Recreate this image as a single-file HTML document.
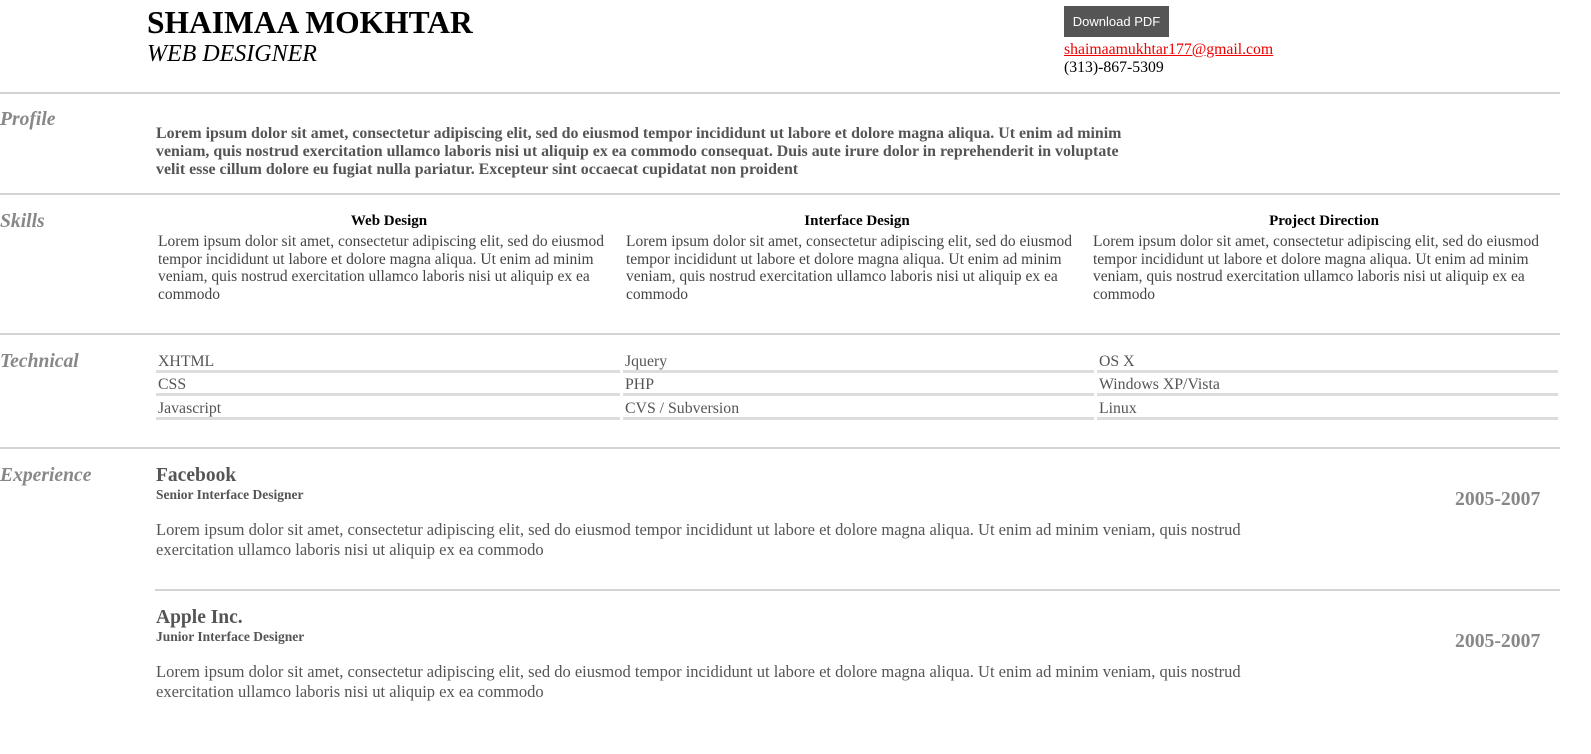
<!DOCTYPE html>
<html><head><meta charset="utf-8"><style>
body{margin:0;width:1591px;height:754px;position:relative;font-family:"Liberation Serif",serif;background:#fff;overflow:hidden}
.a{position:absolute;margin:0}
.hr{position:absolute;left:0;width:1560px;height:2px;background:#d3d3d3}
.lab{position:absolute;left:0;font-style:italic;font-weight:bold;font-size:19.6px;color:#888}
.sk h4{margin:0;text-align:center;font-size:15px;color:#000}
.sk p{margin:3px 0 0;font-size:15.5px;line-height:17.5px;color:#444}
.tc{position:absolute;font-size:15.8px;color:#555;border-bottom:3px solid #ddd;height:21px;line-height:20px;padding-left:2px;box-sizing:border-box}
.co{font-size:19.5px;font-weight:bold;color:#555}
.ro{font-size:13.5px;font-weight:bold;color:#555}
.yr{font-size:19.7px;font-weight:bold;color:#888}
.ex{font-size:16.5px;color:#555;line-height:20px}
</style></head><body>
<div class="a" style="left:147px;top:5px;font-size:31.5px;font-weight:bold">SHAIMAA MOKHTAR</div>
<div class="a" style="left:147px;top:41px;font-size:24px;font-style:italic">WEB DESIGNER</div>
<div class="a" style="left:1064px;top:6px;width:105px;height:31px;background:#555;color:#fff;font-family:'Liberation Sans',sans-serif;font-size:13px;line-height:31px;text-align:center">Download PDF</div>
<div class="a" style="left:1064px;top:41px;font-size:15.75px;line-height:18px"><span style="color:#e00;text-decoration:underline">shaimaamukhtar177@gmail.com</span><br>(313)-867-5309</div>
<div class="hr" style="top:92px"></div>
<div class="lab" style="top:109px">Profile</div>
<div class="a" style="left:156px;top:125px;width:970px;font-size:15.9px;font-weight:bold;color:#555;line-height:18px">Lorem ipsum dolor sit amet, consectetur adipiscing elit, sed do eiusmod tempor incididunt ut labore et dolore magna aliqua. Ut enim ad minim veniam, quis nostrud exercitation ullamco laboris nisi ut aliquip ex ea commodo consequat. Duis aute irure dolor in reprehenderit in voluptate velit esse cillum dolore eu fugiat nulla pariatur. Excepteur sint occaecat cupidatat non proident</div>
<div class="hr" style="top:193px"></div>
<div class="lab" style="top:211px">Skills</div>
<div class="a sk" style="left:158px;top:213px;width:462px"><h4>Web Design</h4><p>Lorem ipsum dolor sit amet, consectetur adipiscing elit, sed do eiusmod tempor incididunt ut labore et dolore magna aliqua. Ut enim ad minim veniam, quis nostrud exercitation ullamco laboris nisi ut aliquip ex ea commodo</p></div>
<div class="a sk" style="left:626px;top:213px;width:462px"><h4>Interface Design</h4><p>Lorem ipsum dolor sit amet, consectetur adipiscing elit, sed do eiusmod tempor incididunt ut labore et dolore magna aliqua. Ut enim ad minim veniam, quis nostrud exercitation ullamco laboris nisi ut aliquip ex ea commodo</p></div>
<div class="a sk" style="left:1093px;top:213px;width:462px"><h4>Project Direction</h4><p>Lorem ipsum dolor sit amet, consectetur adipiscing elit, sed do eiusmod tempor incididunt ut labore et dolore magna aliqua. Ut enim ad minim veniam, quis nostrud exercitation ullamco laboris nisi ut aliquip ex ea commodo</p></div>
<div class="hr" style="top:333px"></div>
<div class="lab" style="top:351px">Technical</div>
<div class="tc" style="left:156px;top:352px;width:464px">XHTML</div>
<div class="tc" style="left:156px;top:375px;width:464px">CSS</div>
<div class="tc" style="left:156px;top:399px;width:464px">Javascript</div>
<div class="tc" style="left:623px;top:352px;width:471px">Jquery</div>
<div class="tc" style="left:623px;top:375px;width:471px">PHP</div>
<div class="tc" style="left:623px;top:399px;width:471px">CVS / Subversion</div>
<div class="tc" style="left:1097px;top:352px;width:461px">OS X</div>
<div class="tc" style="left:1097px;top:375px;width:461px">Windows XP/Vista</div>
<div class="tc" style="left:1097px;top:399px;width:461px">Linux</div>
<div class="hr" style="top:447px"></div>
<div class="lab" style="top:465px">Experience</div>
<div class="a co" style="left:156px;top:465px">Facebook</div>
<div class="a ro" style="left:156px;top:487px">Senior Interface Designer</div>
<div class="a yr" style="left:1455px;top:488px">2005-2007</div>
<div class="a ex" style="left:156px;top:520px;width:1120px">Lorem ipsum dolor sit amet, consectetur adipiscing elit, sed do eiusmod tempor incididunt ut labore et dolore magna aliqua. Ut enim ad minim veniam, quis nostrud exercitation ullamco laboris nisi ut aliquip ex ea commodo</div>
<div class="hr" style="top:589px;left:155px;width:1405px"></div>
<div class="a co" style="left:156px;top:607px">Apple Inc.</div>
<div class="a ro" style="left:156px;top:629px">Junior Interface Designer</div>
<div class="a yr" style="left:1455px;top:630px">2005-2007</div>
<div class="a ex" style="left:156px;top:662px;width:1120px">Lorem ipsum dolor sit amet, consectetur adipiscing elit, sed do eiusmod tempor incididunt ut labore et dolore magna aliqua. Ut enim ad minim veniam, quis nostrud exercitation ullamco laboris nisi ut aliquip ex ea commodo</div>
</body></html>
